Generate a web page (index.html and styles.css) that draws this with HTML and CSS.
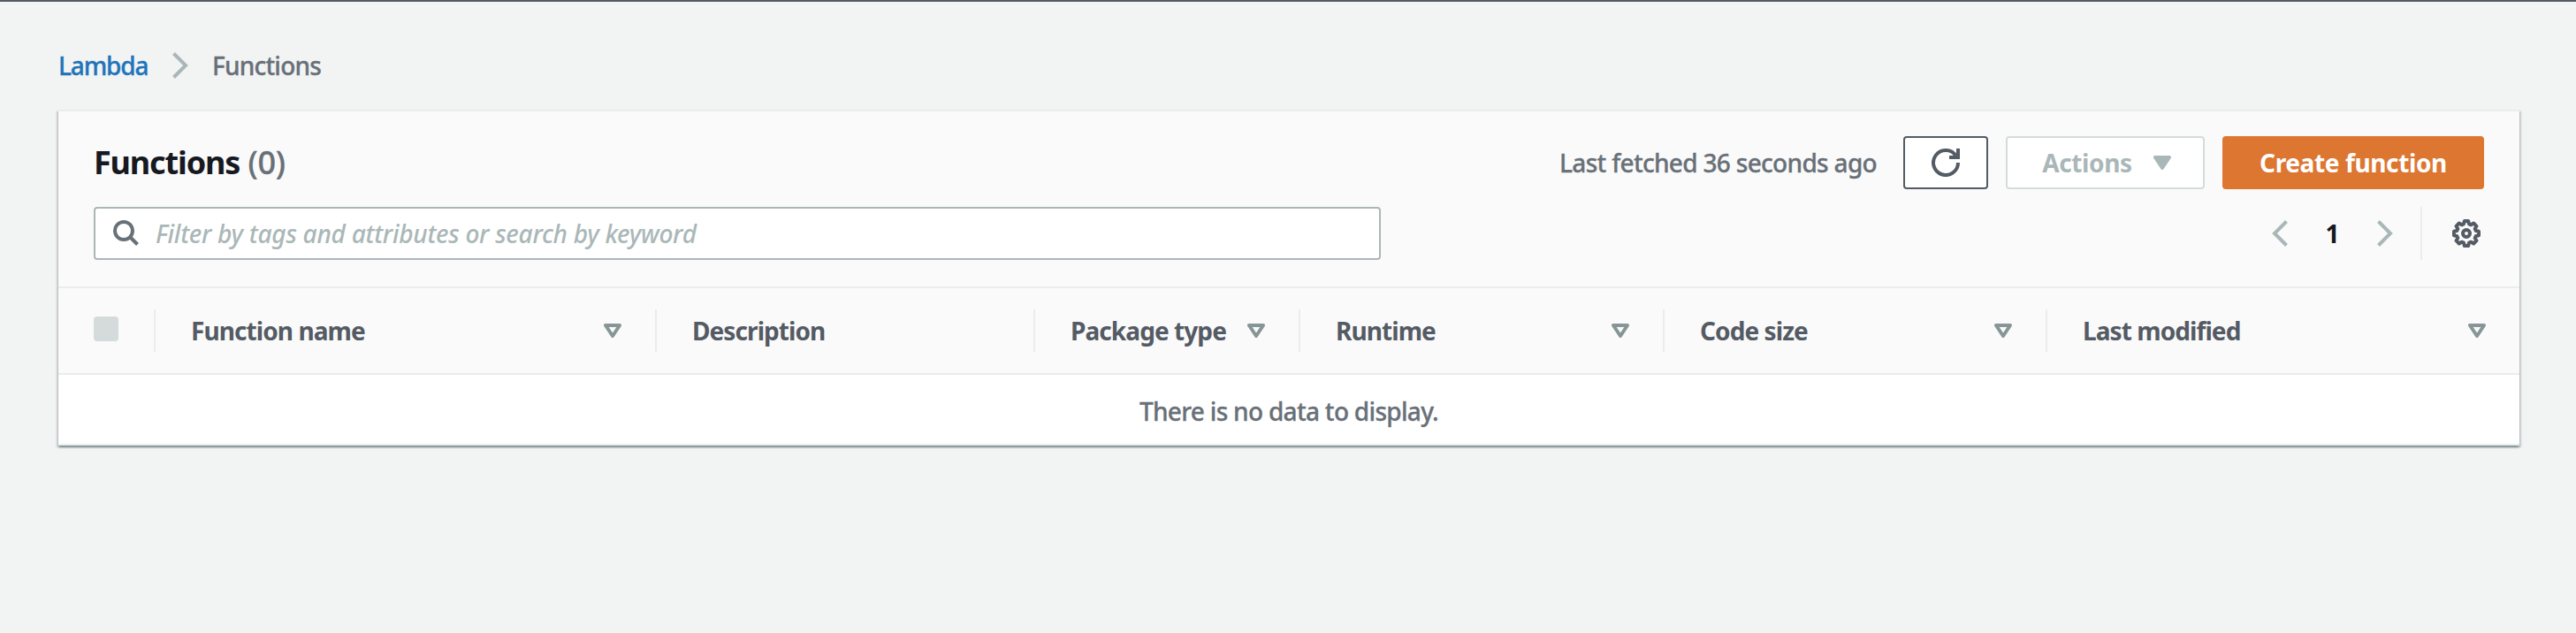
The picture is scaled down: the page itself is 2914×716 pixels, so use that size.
FILE: index.html
```html
<!DOCTYPE html>
<html lang="en">
<head>
<meta charset="utf-8">
<title>Functions - Lambda</title>
<link rel="stylesheet" href="styles.css">
</head>
<body>
<svg class="defs" width="0" height="0" aria-hidden="true">
  <symbol id="sort" viewBox="0 0 20 16"><path d="M2 2h16l-8 12z" fill="none" stroke="currentColor" stroke-width="4" stroke-linejoin="round"/></symbol>
</svg>
<main class="page">
  <nav class="crumbs">
    <a class="crumb-link" href="#">Lambda</a>
    <svg class="crumb-sep" width="18" height="30" viewBox="0 0 18 30"><path d="M1.5 1.5 15 15 1.5 28.500" fill="none" stroke="currentColor" stroke-width="4"/></svg>
    <span class="crumb-current">Functions</span>
  </nav>
  <section class="card">
    <header class="card-head">
      <div class="title-row">
        <h1 class="title">Functions <span class="count">(0)</span></h1>
        <div class="actions">
          <span class="fetched">Last fetched 36 seconds ago</span>
          <button class="btn btn-refresh" aria-label="Refresh"><svg width="32" height="32" viewBox="0 0 32 32" fill="none" stroke="currentColor" stroke-width="4"><path d="M30 16A14 14 0 1 1 27.500 8"/><path d="M30 0v10H20"/></svg></button>
          <button class="btn btn-actions"><span class="actions-text">Actions</span><svg width="20" height="16" viewBox="0 0 20 16"><path d="M2 2h16l-8 12z" fill="currentColor" stroke="currentColor" stroke-width="4" stroke-linejoin="round"/></svg></button>
          <button class="btn btn-create"><span class="create-text">Create function</span></button>
        </div>
      </div>
      <div class="tools-row">
        <label class="search">
          <svg width="30" height="30" viewBox="0 0 30 30" fill="none" stroke="currentColor" stroke-width="4"><circle cx="12" cy="12" r="10"/><path d="M19 19l8.500 8.500"/></svg>
          <span class="placeholder">Filter by tags and attributes or search by keyword</span>
        </label>
        <div class="pager">
          <svg width="18" height="30" viewBox="0 0 18 30"><path d="M16.500 1.500 3 15l13.500 13.500" fill="none" stroke="currentColor" stroke-width="4"/></svg>
          <span class="page-number">1</span>
          <svg width="18" height="30" viewBox="0 0 18 30"><path d="M1.500 1.500 15 15 1.500 28.500" fill="none" stroke="currentColor" stroke-width="4"/></svg>
          <span class="settings"><svg width="32" height="32" viewBox="-16 -16 32 32" fill="none" stroke="currentColor" stroke-width="4" stroke-linejoin="round"><path d="M-2.200-14H2.200L3-10.700 5.300-9.700 8.200-11.500 11.500-8.200 9.700-5.300 10.700-3 14-2.200V2.200L10.700 3 9.700 5.300 11.500 8.200 8.200 11.500 5.300 9.700 3 10.700 2.200 14H-2.200L-3 10.700-5.300 9.700-8.200 11.500-11.500 8.200-9.700 5.300-10.700 3-14 2.200V-2.200L-10.700-3-9.700-5.300-11.500-8.200-8.200-11.500-5.300-9.700-3-10.700z"/><circle r="4"/></svg></span>
        </div>
      </div>
    </header>
    <div class="columns">
      <div class="col col-check"><span class="checkbox"></span></div>
      <div class="col"><span class="th-name">Function name</span><svg class="sort"><use href="#sort"/></svg></div>
      <div class="col"><span class="th-desc">Description</span></div>
      <div class="col"><span class="th-package">Package type</span><svg class="sort"><use href="#sort"/></svg></div>
      <div class="col"><span class="th-runtime">Runtime</span><svg class="sort"><use href="#sort"/></svg></div>
      <div class="col"><span class="th-size">Code size</span><svg class="sort"><use href="#sort"/></svg></div>
      <div class="col"><span class="th-modified">Last modified</span><svg class="sort"><use href="#sort"/></svg></div>
    </div>
    <div class="empty"><span class="empty-text">There is no data to display.</span></div>
  </section>
</main>
</body>
</html>
```
FILE: styles.css
```css
* { box-sizing: border-box; }
body {
  margin: 0;
  min-height: 716px;
  background: #f2f3f3;
  color: #16191f;
  font: 500 28px/44px "Noto Sans", sans-serif;
  border-top: 2px solid #545b64;
  white-space: nowrap;
}
svg { display: block; flex: none; }
.defs { position: absolute; }
.page { padding: 50px 64px 0 66px; }
.crumbs { display: flex; align-items: center; height: 44px; }
.crumb-link { color: #2074ba; text-decoration: none; width: 129px; letter-spacing: -1.15px; }
.crumb-sep { color: #aab7b8; margin-right: 27px; }
.crumb-current { color: #687078; letter-spacing: -0.8px; }
.crumb-link, .crumb-current, .count, .fetched, .empty-text { -webkit-text-stroke: 0.3px currentColor; }
.card {
  margin-top: 28px;
  background: #fff;
  border-top: 2px solid #eaeded;
  border-bottom: 2px solid #eaeded;
  box-shadow: 0 2px 2px rgba(0, 28, 36, .3), 2px 2px 2px rgba(0, 28, 36, .15), -2px 2px 2px rgba(0, 28, 36, .15);
}
.card-head { height: 200px; padding: 28px 40px 0; background: #fafafa; border-bottom: 2px solid #eaeded; }
.title-row, .tools-row, .actions, .pager { display: flex; align-items: center; }
.title-row, .tools-row { justify-content: space-between; height: 60px; }
.tools-row { margin-top: 20px; }
.title { margin: 0; font-size: 36px; font-weight: 700; letter-spacing: -1.15px; }
.count { color: #687078; font-weight: 500; letter-spacing: -0.2px; margin-left: 1px; }
.fetched { color: #687078; margin-right: 30px; letter-spacing: -0.69px; }
.btn {
  display: flex; align-items: center; justify-content: center;
  height: 60px; padding: 0; background: #fff;
  border: 2px solid #545b64; border-radius: 4px;
  font: 700 28px/44px "Noto Sans", sans-serif; color: #545b64;
}
.btn-refresh { width: 96px; margin-right: 20px; }
.btn-actions { width: 225px; margin-right: 20px; padding-left: 3px; gap: 24px; color: #aab7b8; border-color: #d5dbdb; }
.actions-text, .create-text { letter-spacing: -0.38px; }
.btn-create { width: 296px; background: #dd7631; border-color: #dd7631; color: #fff; }
.search {
  display: flex; align-items: center; gap: 18px;
  width: 1456px; height: 60px; padding-left: 20px;
  background: #fff; border: 2px solid #aab7b8; border-radius: 4px; color: #687078;
}
.placeholder { color: #aab7b8; font-style: italic; letter-spacing: -0.27px; }
.pager { color: #aab7b8; }
.page-number { width: 101px; text-align: center; color: #16191f; font-weight: 700; }
.settings { display: flex; align-items: center; height: 60px; margin-left: 31px; padding: 0 4px 0 34px; border-left: 2px solid #eaeded; color: #545b64; }
.columns {
  display: grid; align-items: center;
  grid-template-columns: 110px 567px 428px 300px 412px 433px 534px;
  height: 98px; background: #fafafa; border-bottom: 2px solid #eaeded;
  font-weight: 700; color: #545b64; letter-spacing: -0.92px;
}
.col { display: flex; align-items: center; justify-content: space-between; height: 48px; padding: 0 38px 0 40px; border-right: 2px solid #eaeded; }
.col:last-child { border-right: 0; }
.checkbox { width: 28px; height: 28px; margin-top: -4px; border-radius: 4px; background: #d5dbdb; }
.sort { width: 20px; height: 16px; color: #879596; }
.empty { display: flex; justify-content: center; align-items: center; height: 78px; padding-top: 4px; color: #687078; letter-spacing: -0.7px; }
```
